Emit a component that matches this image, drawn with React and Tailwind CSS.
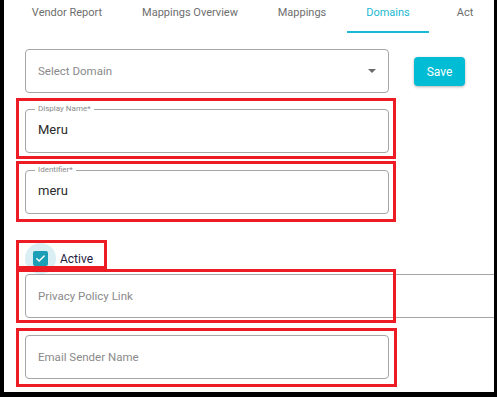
export default function App() {
  const tabs = [
    { label: "Vendor Report", w: "w-[112px]" },
    { label: "Mappings Overview", w: "w-[134px]" },
    { label: "Mappings", w: "w-[90px]" },
    { label: "Domains", w: "w-[82px]", active: true },
    { label: "Act", w: "w-[72px]" },
  ];

  return (
    <div className="w-[497px] h-[397px] bg-black pl-[4px] pr-[3px] pb-[5px]">
      <div className="relative z-0 h-full bg-white overflow-hidden font-['Roboto',sans-serif]">

        {/* Tabs */}
        <div className="flex ml-[7px] h-[33px]">
          {tabs.map((t) => (
            <div
              key={t.label}
              className={`${t.w} shrink-0 h-[33px] pt-[6px] text-center text-[11px] leading-[14px] whitespace-nowrap ${
                t.active ? "text-[#1ab8d2] border-b-2 border-[#1ab8d2]" : "text-[#6e6e6e]"
              }`}
            >
              {t.label}
            </div>
          ))}
        </div>

        <div className="pl-[12px]">
          {/* Select + Save */}
          <div className="flex items-start mt-[16px] ml-[9px]">
            <div className="w-[364px] h-[44px] shrink-0 border border-[#a6a6a6] rounded-[4px] pl-[12px] pr-[12px] flex items-center justify-between">
              <span className="text-[11.5px] text-[#8a8a8a] mt-[2px]">Select Domain</span>
              <span className="w-0 h-0 border-l-[4px] border-r-[4px] border-t-[4px] border-l-transparent border-r-transparent border-t-[#6b6b6b]" />
            </div>
            <button className="ml-[25px] mt-[8px] w-[51px] h-[29px] shrink-0 rounded-[4px] bg-[#00bcd4] text-white text-[12px] shadow-[0_1px_3px_rgba(0,0,0,0.3)]">
              Save
            </button>
          </div>

          {/* Display Name */}
          <div className="mt-[5px] w-[380px] h-[61px] border-[3px] border-[#ed1c24] pt-[8px] pl-[6px]">
            <div className="relative w-[364px] h-[44px] border border-[#a6a6a6] rounded-[4px] pl-[12px] flex items-center">
              <span className="absolute -top-[6px] left-[9px] bg-white px-[3px] text-[8px] leading-[10px] text-[#8a8a8a]">
                Display Name*
              </span>
              <span className="text-[13px] text-[#2a2a2a] -mt-[3px]">Meru</span>
            </div>
          </div>

          {/* Identifier */}
          <div className="mt-[2px] w-[380px] h-[61px] border-[3px] border-[#ed1c24] pt-[6px] pl-[6px]">
            <div className="relative w-[364px] h-[44px] border border-[#a6a6a6] rounded-[4px] pl-[12px] flex items-center">
              <span className="absolute -top-[6px] left-[9px] bg-white px-[3px] text-[8px] leading-[10px] text-[#8a8a8a]">
                Identifier*
              </span>
              <span className="text-[13px] text-[#2a2a2a] -mt-[3px]">meru</span>
            </div>
          </div>

          {/* Active */}
          <div className="mt-[18px] w-[91px] h-[29px] border-[3px] border-[#ed1c24] pl-[14px] pt-[8px] flex items-start">
            <div className="relative w-[15px] h-[15px] shrink-0">
              <span className="absolute -left-[8px] -top-[8px] w-[31px] h-[31px] rounded-full bg-[#d9eff3] -z-10" />
              <span className="absolute inset-0 rounded-[2px] bg-[#1a9fb6] flex items-center justify-center">
                <svg width="11" height="11" viewBox="0 0 24 24" fill="none" stroke="white" strokeWidth="3.2" strokeLinecap="round" strokeLinejoin="round">
                  <path d="M4 12.5l5 5L20 6.5" />
                </svg>
              </span>
            </div>
            <span className="ml-[12px] mt-[1px] text-[12px] leading-[15px] text-[#1e2240]">Active</span>
          </div>

          {/* Privacy Policy Link */}
          <div className="relative w-[380px] h-[54px] pt-[5px] pl-[9px]">
            <div className="w-[490px] h-[44px] border border-[#a6a6a6] rounded-[4px] pl-[12px] flex items-center">
              <span className="text-[11.5px] text-[#8a8a8a] mt-[2px]">Privacy Policy Link</span>
            </div>
            <div className="absolute inset-0 border-[3px] border-[#ed1c24]" />
          </div>

          {/* Email Sender Name */}
          <div className="mt-[5px] w-[381px] h-[59px] border-[3px] border-[#ed1c24] pt-[4px] pl-[6px]">
            <div className="w-[364px] h-[44px] border border-[#a6a6a6] rounded-[4px] pl-[12px] flex items-center">
              <span className="text-[11.5px] text-[#8a8a8a] mt-[2px]">Email Sender Name</span>
            </div>
          </div>
        </div>
      </div>
    </div>
  );
}
